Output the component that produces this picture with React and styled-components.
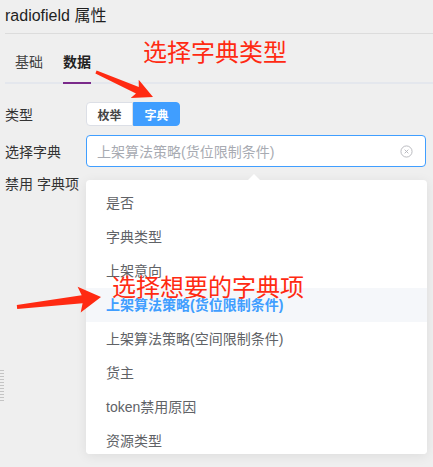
import React from "react";
import styled, { createGlobalStyle } from "styled-components";

const Global = createGlobalStyle`
  html, body { margin: 0; padding: 0; background: #efefef; }
  body { font-family: "Liberation Sans", "Noto Sans CJK SC", sans-serif; }
  #root { width: 433px; height: 467px; overflow: hidden; }
`;

const Page = styled.div`
  position: relative;
  width: 433px;
  height: 467px;
  padding-left: 5px;
  box-sizing: border-box;
  display: flex;
  flex-direction: column;
`;

const Title = styled.div`
  height: 33px;
  line-height: 31px;
  font-size: 16px;
  color: #1f1f1f;
  border-bottom: 1px solid #dcdcdc;
`;

const TabBar = styled.div`
  display: flex;
  margin-top: 8px;
  height: 40px;
  border-bottom: 2px solid #e4e7ed;
`;

const Tab = styled.div`
  padding: 0 10px;
  height: 40px;
  display: flex;
  align-items: stretch;
  font-size: 14px;
  font-weight: ${(p) => (p.$active ? 600 : 400)};
  color: ${(p) => (p.$active ? "#222" : "#444")};
`;

const TabLabel = styled.span`
  line-height: 40px;
  border-bottom: 2px solid ${(p) => (p.$active ? "#7a2a8a" : "transparent")};
  margin-bottom: -2px;
`;

const Form = styled.div`
  display: flex;
  flex-direction: column;
  padding-right: 7px;
  margin-top: 18px;
`;

const Row = styled.div`
  display: flex;
  align-items: center;
  height: ${(p) => p.$h}px;
  margin-top: ${(p) => p.$mt || 0}px;
  position: relative;
`;

const Label = styled.div`
  width: 81px;
  font-size: 14px;
  color: #333;
  flex-shrink: 0;
`;

const Segmented = styled.div`
  display: flex;
  height: 24px;
`;

const SegBtn = styled.div`
  width: 47px;
  box-sizing: border-box;
  display: flex;
  align-items: center;
  justify-content: center;
  font-size: 12px;
  font-weight: 600;
  border: 1px solid ${(p) => (p.$on ? "#409eff" : "#dcdfe6")};
  background: ${(p) => (p.$on ? "#409eff" : "#fff")};
  color: ${(p) => (p.$on ? "#fff" : "#444")};
  border-radius: ${(p) => (p.$first ? "4px 0 0 4px" : "0 4px 4px 0")};
`;

const SelectBox = styled.div`
  position: relative;
  flex: 1;
  height: 32px;
`;

const Input = styled.div`
  height: 32px;
  box-sizing: border-box;
  border: 1px solid #409eff;
  border-radius: 4px;
  background: #fff;
  display: flex;
  align-items: center;
  padding: 0 12px 0 10px;
  font-size: 14px;
  color: #a8abb2;
`;

const Placeholder = styled.span`
  flex: 1;
`;

const Dropdown = styled.div`
  position: absolute;
  left: 0;
  top: 45px;
  width: 341px;
  height: 274px;
  background: #fff;
  border-radius: 4px;
  box-shadow: 0 2px 12px rgba(0, 0, 0, 0.08);
  padding-top: 6px;
  box-sizing: border-box;
  overflow: hidden;
  z-index: 2;
`;

const Caret = styled.div`
  position: absolute;
  left: 162px;
  top: 39px;
  width: 0;
  height: 0;
  border-left: 6px solid transparent;
  border-right: 6px solid transparent;
  border-bottom: 6px solid #fff;
  z-index: 3;
`;

const Item = styled.div`
  height: 34px;
  line-height: 34px;
  padding: 0 20px;
  font-size: 14px;
  white-space: nowrap;
  color: ${(p) => (p.$sel ? "#409eff" : "#606266")};
  font-weight: ${(p) => (p.$sel ? 600 : 400)};
  background: ${(p) => (p.$sel ? "#f5f7fa" : "#fff")};
`;

const Note = styled.div`
  position: absolute;
  left: ${(p) => p.$x}px;
  top: ${(p) => p.$y}px;
  font-family: "Noto Sans CJK SC", sans-serif;
  font-size: 24px;
  line-height: 24px;
  color: #ff2a12;
  white-space: nowrap;
  z-index: 5;
`;

const Overlay = styled.svg`
  position: absolute;
  left: 0;
  top: 0;
  pointer-events: none;
  z-index: 5;
`;

const Handle = styled.div`
  position: absolute;
  left: 0;
  top: 369px;
  width: 4px;
  height: 32px;
  background-image: radial-gradient(#c4c4c4 45%, transparent 50%);
  background-size: 2px 3px;
`;

function arrowPoints(x1, y1, x2, y2, w0, w1, H, hw) {
  const dx = x2 - x1, dy = y2 - y1;
  const L = Math.hypot(dx, dy);
  const ux = dx / L, uy = dy / L;
  const px = -uy, py = ux;
  const pt = (a, b) => `${(x1 + ux * a + px * b).toFixed(1)},${(y1 + uy * a + py * b).toFixed(1)}`;
  return [
    pt(0, -w0 / 2),
    pt(L - H, -w1 / 2),
    pt(L - H - 3, -hw),
    pt(L, 0),
    pt(L - H - 3, hw),
    pt(L - H, w1 / 2),
    pt(0, w0 / 2),
  ].join(" ");
}

const items = [
  "是否",
  "字典类型",
  "上架意向",
  "上架算法策略(货位限制条件)",
  "上架算法策略(空间限制条件)",
  "货主",
  "token禁用原因",
  "资源类型",
];

export default function App() {
  return (
    <>
      <Global />
      <Page>
        <Title>radiofield 属性</Title>
        <TabBar>
          <Tab>
            <TabLabel>基础</TabLabel>
          </Tab>
          <Tab $active>
            <TabLabel $active>数据</TabLabel>
          </Tab>
        </TabBar>
        <Form>
          <Row $h={24}>
            <Label>类型</Label>
            <Segmented>
              <SegBtn $first>枚举</SegBtn>
              <SegBtn $on>字典</SegBtn>
            </Segmented>
          </Row>
          <Row $h={32} $mt={9}>
            <Label>选择字典</Label>
            <SelectBox>
              <Input>
                <Placeholder>上架算法策略(货位限制条件)</Placeholder>
                <svg width="13" height="13" viewBox="0 0 14 14">
                  <circle cx="7" cy="7" r="6" fill="none" stroke="#b4b6bb" strokeWidth="1" />
                  <path d="M5 5 L9 9 M9 5 L5 9" stroke="#b4b6bb" strokeWidth="1" />
                </svg>
              </Input>
              <Caret />
              <Dropdown>
                {items.map((t, i) => (
                  <Item key={i} $sel={i === 3}>
                    {t}
                  </Item>
                ))}
              </Dropdown>
            </SelectBox>
          </Row>
          <Row $h={16} $mt={8}>
            <Label>禁用 字典项</Label>
          </Row>
        </Form>
        <Handle />
        <Note $x={143} $y={39}>选择字典类型</Note>
        <Note $x={112} $y={274}>选择想要的字典项</Note>
        <Overlay width="433" height="467">
          <polygon points={arrowPoints(96, 72, 153, 97, 3, 7, 17, 10)} fill="#ff2a12" />
          <polygon points={arrowPoints(17, 307, 101, 297, 4, 8, 19, 13)} fill="#ff2a12" />
        </Overlay>
      </Page>
    </>
  );
}
